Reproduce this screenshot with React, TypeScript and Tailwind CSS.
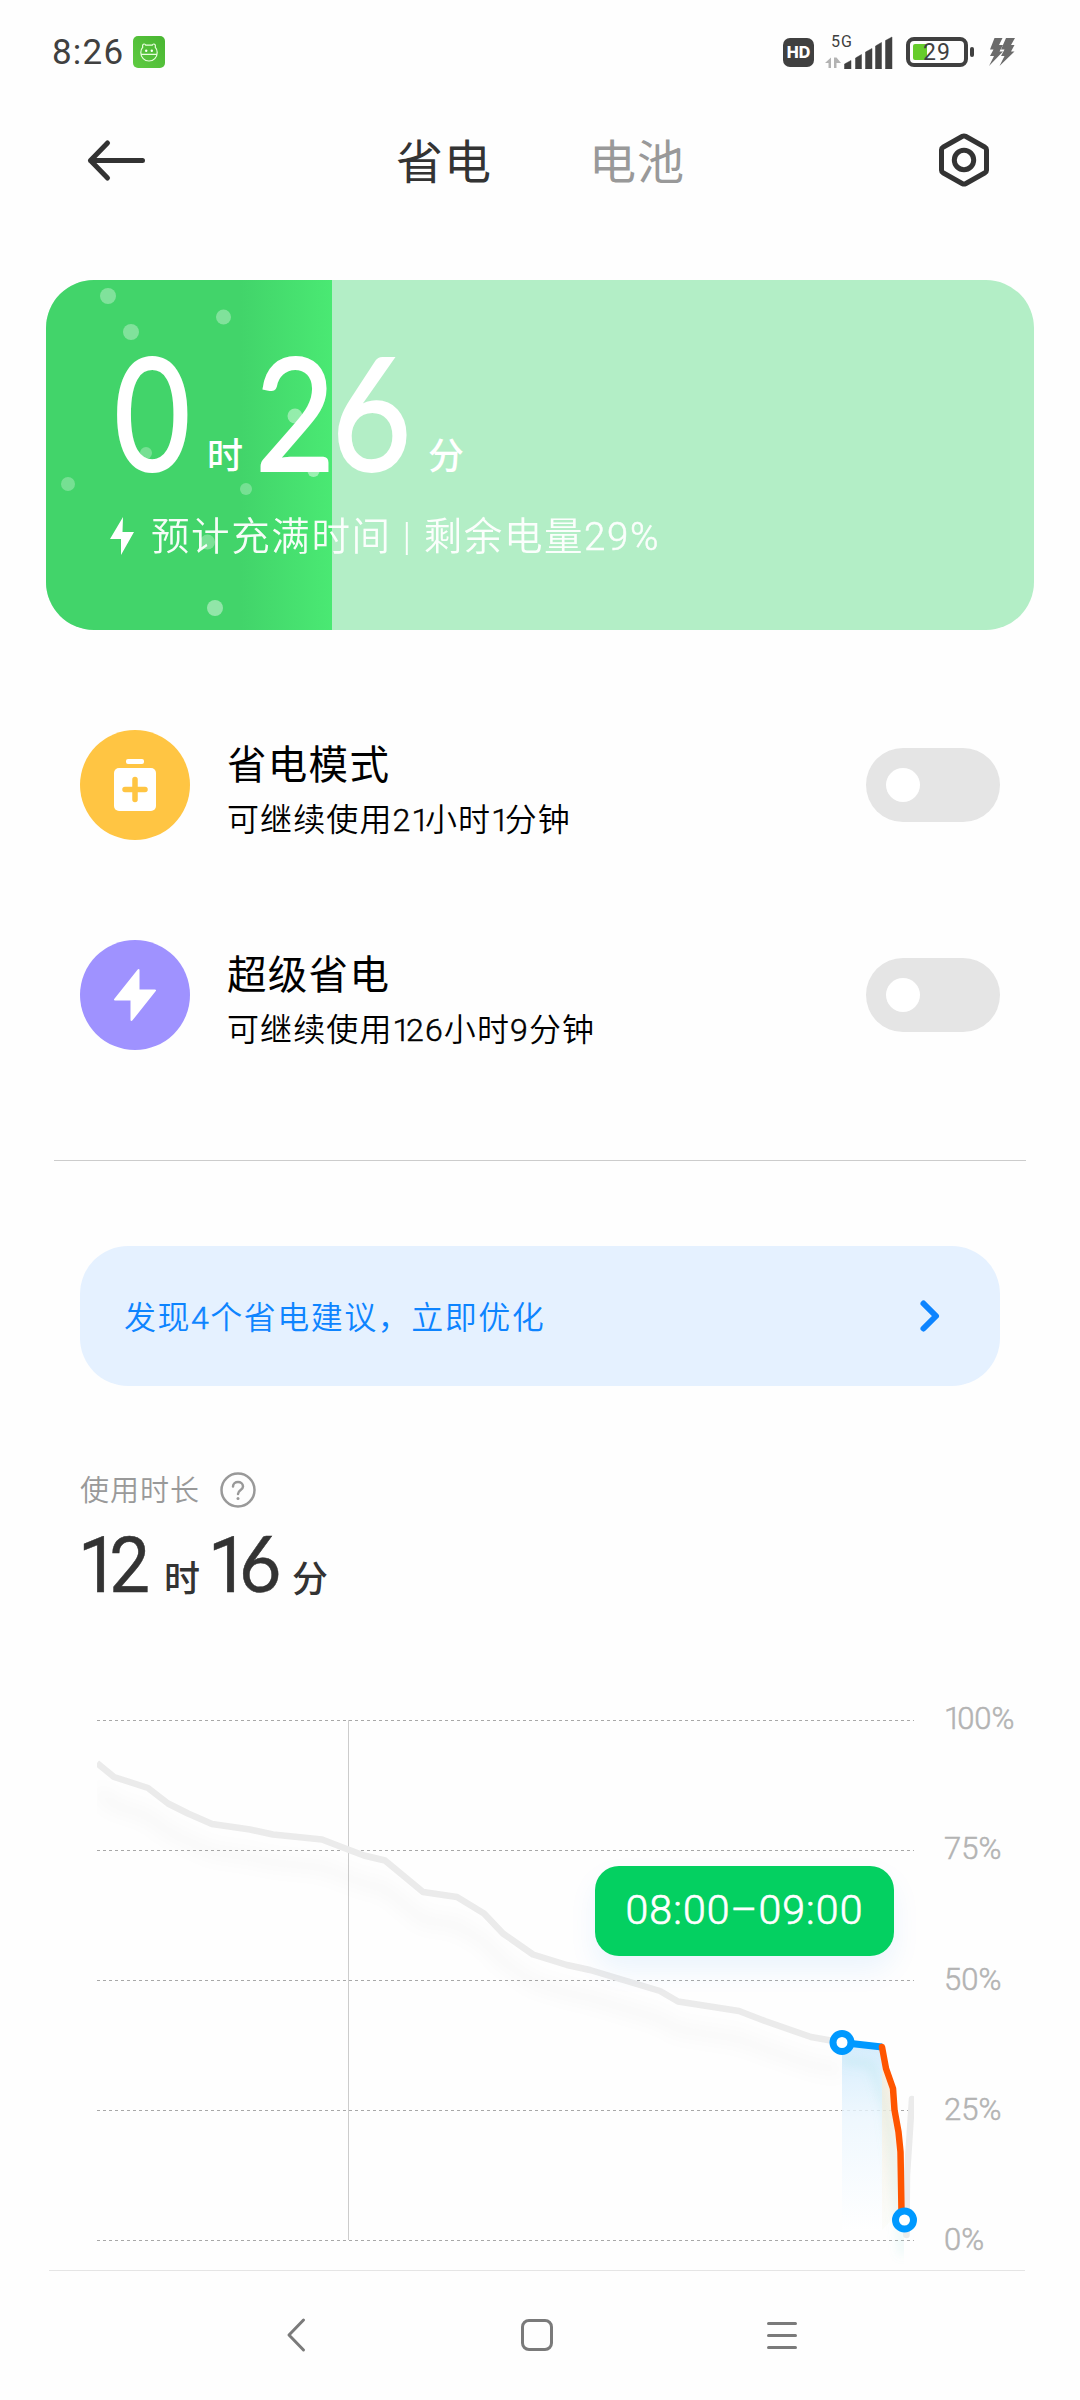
import { useState } from "react";
import { Switch } from "@headlessui/react";

const GRID_LEVELS = [100, 75, 50, 25, 0];

const BUBBLES = [
  { x: 62, y: 16, r: 8, o: 0.33 },
  { x: 85, y: 52, r: 8, o: 0.33 },
  { x: 177.5, y: 37, r: 7.5, o: 0.33 },
  { x: 249, y: 136, r: 7.5, o: 0.42 },
  { x: 100, y: 173, r: 6, o: 0.28 },
  { x: 267.5, y: 191, r: 6, o: 0.45 },
  { x: 200, y: 209, r: 6, o: 0.28 },
  { x: 22, y: 204, r: 7, o: 0.28 },
  { x: 161.5, y: 262, r: 7.5, o: 0.3 },
  { x: 169, y: 328, r: 8, o: 0.42 },
];

// battery level history, in chart coordinates (y = 10 is 100%, y = 530 is 0%)
const HISTORY =
  "0,53 17,67 51,78 71,93.5 91,103.5 115,114 153,119.5 176,124.5 225,129.5 251,139.5 267,145.5 288,150.5 326,182 360,187 387,203.5 406,223.5 436,244.5 470,255 493,260 563,281 581,291.5 642,301 668,311 714,327 745,332.5";

// Roboto's "1" is as wide as the other digits, so it gets its own tracking;
// light digits are stroked a little to sit well beside the Chinese glyphs
function Digits({ text }: { text: string }) {
  return (
    <span>
      {text.split(/(1|[02-9%]+)/).map((part, i) => {
        if (part === "1") {
          return (
            <span key={i} className="tracking-[-0.13em] [-webkit-text-stroke:0.5px_currentColor]">
              1
            </span>
          );
        }
        if (i % 2 === 1) {
          return (
            <span key={i} className="[-webkit-text-stroke:0.5px_currentColor]">
              {part}
            </span>
          );
        }
        return part;
      })}
    </span>
  );
}

function StatusBar() {
  return (
    <div className="flex h-[104px] items-center pl-[52px] text-[#404040]">
      <span className="w-[70px] whitespace-nowrap font-['Roboto'] text-[35px] leading-none tracking-[1.200px]">8:26</span>
      <svg className="ml-[11px]" width="32" height="32" viewBox="0 0 32 32" fill="none">
        <defs>
          <linearGradient id="app" x1="0" y1="1" x2="1" y2="0">
            <stop stopColor="#5fcb42" />
            <stop offset="1" stopColor="#48b531" />
          </linearGradient>
        </defs>
        <rect width="32" height="32" rx="5" fill="url(#app)" />
        <path
          d="M7.800 16.500c0 5 3.600 8.500 8.200 8.500s8.200-3.500 8.200-8.500c0-2.200-.8-4-2-5.300.6-1.500 0-3.200-1.500-3.200-.7 0-1.200.4-1.500 1.200h-6.400c-.3-.8-.8-1.200-1.500-1.200-1.500 0-2.100 1.700-1.500 3.200-1.200 1.300-2 3.100-2 5.300zM8 18.300h16"
          stroke="#e9ffdf"
          strokeWidth="1.200"
        />
        <circle cx="13.200" cy="14.700" r="1.200" fill="#fff" />
        <circle cx="18.800" cy="14.700" r="1.200" fill="#fff" />
      </svg>

      <div className="ml-auto mr-[64px] flex items-center">
        <div className="flex h-[29px] w-[31px] items-center justify-center rounded-[7px] bg-[#404040] font-['Inter'] text-[16px] font-extrabold leading-none text-white">
          HD
        </div>
        <div className="relative ml-[11px] h-[34px] w-[68px]">
          <span className="absolute left-[6px] top-[-1px] font-['Roboto'] text-[16px] leading-[16px] tracking-[1px]">5G</span>
          <svg className="absolute inset-0" width="68" height="34" viewBox="0 0 68 34">
            <path d="M0 28l6-5.500V33H3.500v-5zM9 22.500h2.500V33H9zM11.500 22.500L16 28h-4.500z" fill="#b3b3b3" />
            <path
              d="M19.500 29l6.500-3.500V34h-6.500zM30.500 23l6-3.500V34h-6zM40.500 17l6.500-3.500V34h-6.500zM50.500 11l6-3.500V34h-6zM60.500 5.500L67 2v32h-6.500z"
              fill="#404040"
              stroke="#404040"
              strokeWidth=".5"
              strokeLinejoin="round"
            />
          </svg>
        </div>
        <div className="relative ml-[13px] flex h-[30px] w-[62px] items-center justify-center rounded-[8px] border-4 border-[#404040]">
          <span className="absolute left-[3px] top-[3px] h-4 w-[14px] rounded-[2px] bg-[#66cc2b]" />
          <span className="relative font-['Roboto'] text-[23px] leading-none tracking-[1px]">29</span>
        </div>
        <div className="ml-[2px] h-[10px] w-1 rounded-[2px] bg-[#404040]" />
        <svg className="ml-[14px]" width="28" height="30" viewBox="0 0 28 30" fill="#6b6b6b">
          <path d="M6.500 1h8l-3.500 7h4l-3.500 6.500h3.500L1 29l5-10H2l3.500-6.500H2z" />
          <path d="M18 1h9l-4 7h3.500L23 14.500h3.500L11.500 29l5-10H13l3.500-6.500H13z" />
        </svg>
      </div>
    </div>
  );
}

function Header() {
  return (
    <header className="flex h-[112px] items-center justify-between pl-[86px] pr-[90px] text-[#333333]">
      <svg width="60" height="44" viewBox="0 0 60 44" fill="none" stroke="currentColor" strokeWidth="5" strokeLinecap="round" strokeLinejoin="round">
        <path d="M56.500 22.500H4.500M21.500 5L4.500 22.500L21.500 40" />
      </svg>
      <nav className="flex gap-[97px] pr-[3px] pt-[5px] text-[47px] leading-none tracking-[1px]">
        <span>省电</span>
        <span className="text-[#999999]">电池</span>
      </nav>
      <svg width="52" height="56" viewBox="0 0 52 56" fill="none" stroke="currentColor" strokeWidth="5" strokeLinejoin="round">
        <path d="M24.500 4.300q1.500-.8 3 0L47 15.300q1.500.8 1.500 2.500v20.400q0 1.700-1.500 2.500L27.500 51.700q-1.500.8-3 0L5 40.700q-1.500-.8-1.500-2.500V17.800q0-1.700 1.500-2.500z" />
        <circle cx="26" cy="28" r="9.700" />
      </svg>
    </header>
  );
}

function ChargeCard() {
  return (
    <section className="relative mx-[46px] mt-[64px] h-[350px] overflow-hidden rounded-[48px] bg-[#b3eec6] text-white">
      <svg className="absolute left-0 top-0" width="286" height="350" viewBox="0 0 286 350">
        <defs>
          <linearGradient id="charge" x1="0" x2="1" y1="0" y2="0">
            <stop offset="0.680" stopColor="#42d46a" />
            <stop offset="1" stopColor="#4ae973" />
          </linearGradient>
        </defs>
        <rect width="286" height="350" fill="url(#charge)" />
        {BUBBLES.map((b) => (
          <circle key={`${b.x}-${b.y}`} cx={b.x} cy={b.y} r={b.r} fill="#fff" fillOpacity={b.o} />
        ))}
      </svg>
      <div className="relative flex h-[195px] items-end pl-[68px] font-medium leading-none">
        <span className="-mb-[15px] w-[93px] origin-left scale-x-[0.84] font-['Lato'] text-[157px] font-normal leading-[160px] [-webkit-text-stroke:2px_#fff]">
          0
        </span>
        <span className="w-[48px] text-[36px]">时</span>
        <span className="-mb-[15px] w-[173px] origin-left scale-x-[0.88] font-['Lato'] text-[157px] font-normal leading-[160px] tracking-[-4px] [-webkit-text-stroke:2px_#fff]">
          26
        </span>
        <span className="text-[36px]">分</span>
      </div>
      <div className="relative mt-[40px] flex items-center pl-[64px]">
        <svg width="24" height="40" viewBox="0 0 24 40" fill="#fff">
          <path d="M13 1L0 23h11v16l13-23H12.500z" />
        </svg>
        <span className="ml-[17px] whitespace-nowrap pt-[3px] text-[38.500px] font-[350] leading-none tracking-[1.600px] opacity-95">
          <Digits text="预计充满时间 | 剩余电量29%" />
        </span>
      </div>
    </section>
  );
}

interface ModeRowProps {
  title: string;
  detail: string;
  tone: string;
  icon: React.ReactNode;
}

function ModeRow({ title, detail, tone, icon }: ModeRowProps) {
  const [enabled, setEnabled] = useState(false);

  return (
    <div className="flex h-[110px] items-center px-20">
      <div className={`flex size-[110px] items-center justify-center rounded-full ${tone}`}>{icon}</div>
      <div className="ml-[37px] flex flex-col gap-[18px] pt-[11px] text-black">
        <span className="text-[39.500px] leading-[40px] tracking-[1.300px]">{title}</span>
        <span className="text-[32px] font-[350] leading-[32px] tracking-[1.100px]">
          <Digits text={detail} />
        </span>
      </div>
      <Switch
        checked={enabled}
        onChange={setEnabled}
        className="group ml-auto flex h-[74px] w-[134px] items-center rounded-full bg-[#e5e5e5] px-5 data-checked:bg-[#0099ff]"
      >
        <span className="size-[34px] rounded-full bg-white transition-transform group-data-checked:translate-x-[60px]" />
      </Switch>
    </div>
  );
}

function UsageSummary() {
  return (
    <section className="px-20 pt-[84px] text-[#333333]">
      <div className="flex h-[40px] items-center text-[#999999]">
        <span className="pt-[3px] text-[29px] font-[350] leading-none tracking-[1px]">使用时长</span>
        <svg className="ml-[19px]" width="38" height="38" viewBox="0 0 38 38" fill="none" stroke="currentColor" strokeWidth="2.500" strokeLinecap="round">
          <circle cx="19" cy="19" r="16.500" />
          <path d="M14 15.500c0-6 10-6 10 0 0 3.500-5 3.500-5 7.500" />
          <circle cx="19" cy="27.500" r="1.500" fill="currentColor" stroke="none" />
        </svg>
      </div>
      <div className="flex h-[88px] items-end font-medium leading-none">
        <span className="-mb-[7px] -ml-[2px] w-[86px] origin-left scale-x-[0.93] text-[78px] font-normal leading-[78px]">
          <Digits text="12" />
        </span>
        <span className="w-[47px] text-[36px]">时</span>
        <span className="-mb-[7px] -ml-[3px] w-[84px] origin-left scale-x-[0.93] text-[78px] font-normal leading-[78px]">
          <Digits text="1" />
          <span className="font-['Lato'] [-webkit-text-stroke:0.5px_#333]">6</span>
        </span>
        <span className="text-[36px]">分</span>
      </div>
    </section>
  );
}

function BatteryChart() {
  return (
    <section className="relative mt-[112px] flex h-[560px] pl-[97px]">
      <svg width="830" height="560" viewBox="0 0 830 560" fill="none">
        <defs>
          <linearGradient id="cool" x1="0" x2="0" y1="0" y2="1">
            <stop stopColor="#cbe8fc" />
            <stop offset="0.400" stopColor="#ebf6fe" />
            <stop offset="1" stopColor="#ffffff" />
          </linearGradient>
          <linearGradient id="warm" x1="0" x2="0" y1="0" y2="1">
            <stop stopColor="#f5e8d6" />
            <stop offset="1" stopColor="#fbfcf9" />
          </linearGradient>
          <filter id="soft" x="-10%" y="-10%" width="120%" height="130%">
            <feGaussianBlur stdDeviation="8" />
          </filter>
          <filter id="glow" x="-50%" y="-10%" width="200%" height="120%">
            <feGaussianBlur stdDeviation="5" />
          </filter>
          <clipPath id="plot">
            <rect width="817" height="560" />
          </clipPath>
          <clipPath id="range">
            <rect x="745" width="62" height="560" />
          </clipPath>
        </defs>

        {GRID_LEVELS.map((level, i) => (
          <path key={level} d={`M0 ${10.5 + i * 130}H817`} stroke="#a8a8a8" strokeDasharray="3 3" />
        ))}
        <path d="M251.500 10V530" stroke="#cccccc" />

        <g clipPath="url(#plot)">
          <polyline points={HISTORY} transform="translate(0 28)" stroke="#000" strokeOpacity=".022" strokeWidth="14" filter="url(#soft)" />
          <polyline points={HISTORY} stroke="#ebebeb" strokeWidth="6.500" strokeLinejoin="round" />
          <path d="M809.500 525L810 465L815 389" stroke="#ebebeb" strokeWidth="6.500" strokeLinecap="round" strokeLinejoin="round" />
        </g>

        <path d="M745 333L785 337V520H745z" fill="url(#cool)" fillOpacity=".8" />
        <path d="M785 337L796 378L803 441L804 500L785 520z" fill="url(#warm)" fillOpacity=".8" />
        <g clipPath="url(#range)">
          <path d="M745 350L775 355L789 400L796 450L806 545" stroke="#7fd8d0" strokeOpacity=".14" strokeWidth="9" filter="url(#glow)" />
        </g>
        <path d="M745 332.500L785 337" stroke="#0099ff" strokeWidth="7" />
        <path d="M785 337L789 358.500L796 378.500L797.500 400L801.500 422L803.500 442L804.500 502" stroke="#ff5500" strokeWidth="6.500" strokeLinecap="round" strokeLinejoin="round" />
        <circle cx="745" cy="332.500" r="9" fill="#fff" stroke="#0099ff" strokeWidth="7" />
        <circle cx="807.500" cy="510" r="9" fill="#fff" stroke="#0099ff" strokeWidth="7" />
      </svg>

      <div className="flex h-[538px] flex-col justify-between pl-[17px] pt-[1px] text-[31px] font-light leading-[16px] text-[#b3b3b3]">
        {GRID_LEVELS.map((level) => (
          <Digits key={level} text={`${level}%`} />
        ))}
      </div>

      <div className="absolute left-[595px] top-[156px] flex h-[90px] w-[299px] items-center justify-center rounded-[24px] bg-[#04d061] text-[41px] font-light tracking-[1.100px] text-white shadow-[0_14px_28px_rgba(0,130,240,0.08)] [-webkit-text-stroke:0.7px_#fff]">
        08:00–09:00
      </div>
    </section>
  );
}

function NavigationBar() {
  return (
    <div className="flex h-[128px] w-full items-center pl-[285px] text-[#7a7a7a]">
      <svg width="22" height="36" viewBox="0 0 22 36" fill="none" stroke="currentColor" strokeWidth="3" strokeLinecap="round" strokeLinejoin="round">
        <path d="M18.500 3L4 18l14.500 15" />
      </svg>
      <div className="ml-[214px] size-8 rounded-[8px] border-[3px] border-current" />
      <div className="ml-[214px] flex w-[30px] flex-col gap-[9px]">
        <span className="h-[3px] rounded-full bg-current" />
        <span className="h-[3px] rounded-full bg-current" />
        <span className="h-[3px] rounded-full bg-current" />
      </div>
    </div>
  );
}

export default function App() {
  return (
    <div className="h-[2400px] w-[1080px] overflow-hidden bg-[#fefefe] font-['Roboto','Noto_Sans_CJK_SC',sans-serif]">
      <StatusBar />
      <Header />
      <ChargeCard />

      <div className="mt-[100px] flex flex-col gap-[100px]">
        <ModeRow
          title="省电模式"
          detail="可继续使用21小时1分钟"
          tone="bg-[#ffc543]"
          icon={
            <svg width="42" height="52" viewBox="0 0 42 52" fill="#fff">
              <rect x="12" width="18" height="5" rx="2" />
              <rect y="9" width="42" height="43" rx="5" />
              <path d="M21 20.500v20M11 30.500h20" stroke="#ffc543" strokeWidth="5.500" strokeLinecap="round" />
            </svg>
          }
        />
        <ModeRow
          title="超级省电"
          detail="可继续使用126小时9分钟"
          tone="bg-[#9f92ff]"
          icon={
            <svg width="42" height="52" viewBox="0 0 42 52" fill="#fff" stroke="#fff" strokeWidth="2" strokeLinejoin="round">
              <path d="M24.500 1L1 30.500h16.500V51L41 21.500H24.500z" />
            </svg>
          }
        />
      </div>

      <div className="mx-[54px] mt-[110px] h-px bg-[#cccccc]" />

      <button className="mx-20 mt-[85px] flex h-[140px] w-[920px] items-center justify-between rounded-[48px] bg-[#e5f1ff] pl-[44px] pr-[58px] text-[#0d84ff]">
        <span className="pt-[3px] text-[32px] font-[350] leading-none tracking-[1.500px]">
          <Digits text="发现4个省电建议，立即优化" />
        </span>
        <svg width="24" height="34" viewBox="0 0 24 34" fill="none" stroke="currentColor" strokeWidth="6" strokeLinecap="round" strokeLinejoin="round">
          <path d="M5.500 4.500L18 17L5.500 29.500" />
        </svg>
      </button>

      <UsageSummary />
      <BatteryChart />

      <div className="ml-[49px] h-px w-[976px] bg-[#e5e5e5]" />
      <NavigationBar />
    </div>
  );
}
